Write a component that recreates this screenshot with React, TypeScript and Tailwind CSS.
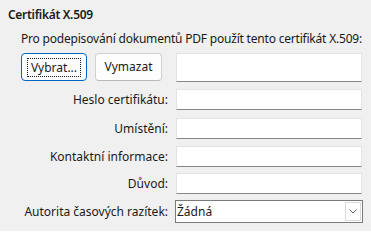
import React from "react";

const font = { fontFamily: '"Noto Sans", "Liberation Sans", sans-serif' };

function Field({ label, className = "" }: { label: string; className?: string }) {
  return (
    <div className={`flex items-center ${className}`}>
      <div className="w-[176px] pr-[8px] text-right leading-[21px]">{label}</div>
      <div className="h-[21px] w-[186px] border border-[#e3e3e3] border-b-[#868686] bg-white" />
    </div>
  );
}

export default function App() {
  return (
    <div
      className="h-[231px] w-[371px] overflow-hidden bg-[#f0f0f0] text-[12px] text-[#1a1a1a]"
      style={font}
    >
      <div className="pl-[8px] pt-[7px] text-[12px] font-semibold leading-[16px] tracking-[-0.3px]">
        Certifikát X.509
      </div>
      <div className="mt-[8px] pl-[21px] leading-[16px] tracking-[-0.2px]">
        Pro podepisování dokumentů PDF použít tento certifikát X.509:
      </div>

      <div className="mt-[6px] flex items-start">
        <div className="flex w-[176px] gap-[8px] pl-[21px]">
          <button
            type="button"
            className="flex h-[28px] w-[66px] items-center justify-center rounded-[4px] border border-[#0067c0] bg-[#fdfdfd]"
          >
            <span className="border border-dotted border-[#1a1a1a] px-[3px] leading-[17px]">Vybrat...</span>
          </button>
          <button
            type="button"
            className="flex h-[28px] w-[67px] items-center justify-center rounded-[4px] border border-[#d0d0d0] border-b-[#b8b8b8] bg-[#fdfdfd]"
          >
            Vymazat
          </button>
        </div>
        <div className="h-[29px] w-[186px] border border-[#e3e3e3] border-b-[#868686] bg-white" />
      </div>

      <Field label="Heslo certifikátu:" className="mt-[7px]" />
      <Field label="Umístění:" className="mt-[8px]" />
      <Field label="Kontaktní informace:" className="mt-[7px]" />
      <Field label="Důvod:" className="mt-[6px]" />

      <div className="mt-[6px] flex items-center">
        <div className="w-[175px] pr-[7px] text-right leading-[23px]">Autorita časových razítek:</div>
        <div className="flex h-[23px] w-[188px] items-center border border-[#7a7a7a] bg-white">
          <span className="flex-1 pl-[1px] leading-[21px]">Žádná</span>
          <span className="mr-[1px] flex h-[19px] w-[16px] items-center justify-center border border-[#dadada] bg-white">
            <svg width="8" height="5" viewBox="0 0 8 5" fill="none">
              <path d="M0.5 0.5 L4 4 L7.5 0.5" stroke="#606060" strokeWidth="1" />
            </svg>
          </span>
        </div>
      </div>
    </div>
  );
}
